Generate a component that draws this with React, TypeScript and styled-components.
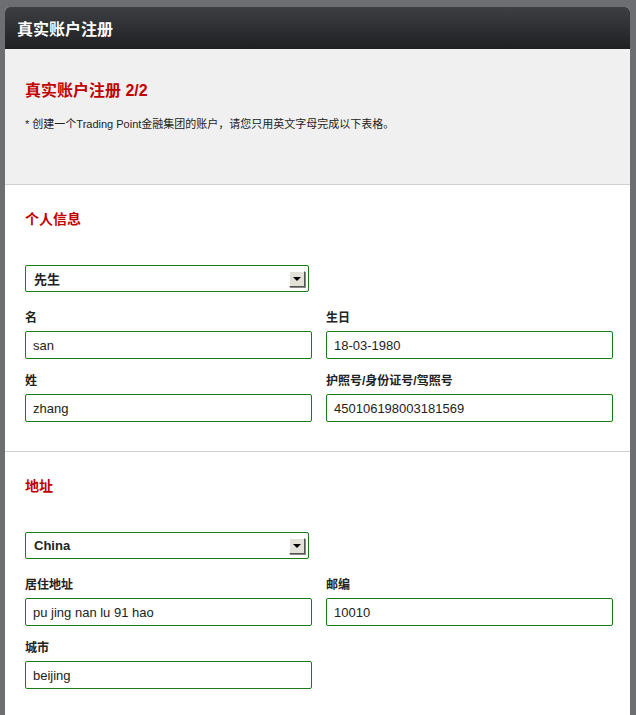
import React from "react";
import styled, { createGlobalStyle } from "styled-components";

const Global = createGlobalStyle`
  html, body { margin: 0; padding: 0; background: #6d6e71; }
  body { font-family: "Liberation Sans", "Noto Sans CJK SC", sans-serif; font-size: 12px; color: #222; }
`;

const Page = styled.div`
  padding: 7px 6px 0 5px;
  height: 708px;
  overflow: hidden;
`;
const Card = styled.div`
  background: #fff;
  border-radius: 5px 5px 0 0;
  overflow: hidden;
`;
const Header = styled.div`
  height: 42px;
  background: linear-gradient(#3e3f43, #1f2022);
  color: #fff;
  font-size: 16px;
  font-weight: bold;
  display: flex;
  align-items: center;
  padding-left: 12px;
`;
const Intro = styled.div`
  background: #f0f0f0;
  height: 136px;
  padding: 32px 20px 0;
  box-sizing: border-box;
  border-bottom: 1px solid #d0d0d0;
`;
const Title = styled.div<{ $size: number }>`
  color: #c00000;
  font-weight: bold;
  font-size: ${p => p.$size}px;
  line-height: 20px;
`;
const Note = styled.div`
  margin-top: 14px;
  font-size: 11px;
  color: #222;
`;
const Section = styled.div`
  padding: 24px 20px 29px;
  border-bottom: 1px solid #d0d0d0;
`;
const SelectBox = styled.div`
  margin-top: 36px;
  width: 284px;
  height: 27px;
  box-sizing: border-box;
  border: 1px solid #1b7a1b;
  border-radius: 2px;
  display: flex;
  align-items: center;
  justify-content: space-between;
  padding: 0 3px 0 8px;
  font-weight: bold;
  font-size: 13px;
`;
const Arrow = styled.div`
  width: 16px;
  height: 16px;
  box-sizing: border-box;
  background: #e4e1d9;
  border: 1px solid;
  border-color: #fff #555 #555 #fff;
  box-shadow: 1px 1px 0 #888;
  display: flex;
  align-items: center;
  justify-content: center;
  &::after {
    content: "";
    border-left: 4px solid transparent;
    border-right: 4px solid transparent;
    border-top: 4px solid #000;
  }
`;
const Grid = styled.div`
  margin-top: 19px;
  display: grid;
  grid-template-columns: 287px 287px;
  column-gap: 14px;
  row-gap: 15px;
`;
const Field = styled.div`
  display: flex;
  flex-direction: column;
  gap: 6px;
`;
const Label = styled.div`
  font-weight: bold;
  font-size: 12px;
  line-height: 14px;
`;
const Input = styled.div`
  height: 28px;
  box-sizing: border-box;
  border: 1px solid #1b7a1b;
  border-radius: 2px;
  display: flex;
  align-items: center;
  padding-left: 7px;
  font-size: 13px;
`;

const F = ({ l, v }: { l: string; v: string }) => (
  <Field><Label>{l}</Label><Input>{v}</Input></Field>
);

export default function App() {
  return (
    <Page>
      <Global />
      <Card>
        <Header>真实账户注册</Header>
        <Intro>
          <Title $size={16}>真实账户注册 2/2</Title>
          <Note>* 创建一个Trading Point金融集团的账户，请您只用英文字母完成以下表格。</Note>
        </Intro>
        <Section>
          <Title $size={14}>个人信息</Title>
          <SelectBox>先生<Arrow /></SelectBox>
          <Grid>
            <F l="名" v="san" />
            <F l="生日" v="18-03-1980" />
            <F l="姓" v="zhang" />
            <F l="护照号/身份证号/驾照号" v="450106198003181569" />
          </Grid>
        </Section>
        <Section>
          <Title $size={14}>地址</Title>
          <SelectBox>China<Arrow /></SelectBox>
          <Grid>
            <F l="居住地址" v="pu jing nan lu 91 hao" />
            <F l="邮编" v="10010" />
            <F l="城市" v="beijing" />
          </Grid>
        </Section>
      </Card>
    </Page>
  );
}
